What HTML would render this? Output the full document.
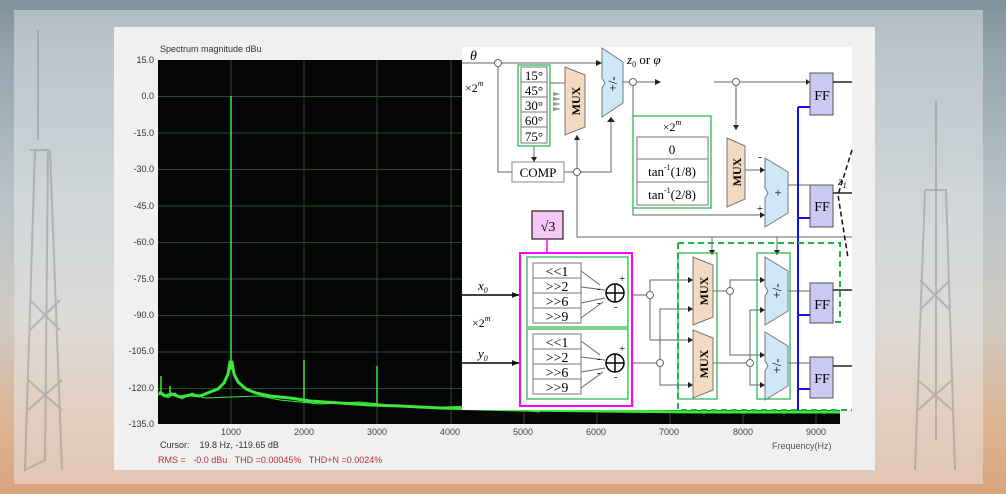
<!DOCTYPE html>
<html><head><meta charset="utf-8"><style>
html,body{margin:0;padding:0}
body{width:1006px;height:494px;overflow:hidden;position:relative;font-family:"Liberation Sans",sans-serif;
background:linear-gradient(180deg,#7f919c 0%,#93a3ad 10%,#b9c3c8 40%,#cfcac2 65%,#dcb595 85%,#d9a47e 100%);}
.ov{position:absolute;left:14px;top:10px;width:969px;height:474px;background:rgba(235,238,240,0.45)}
.panel{position:absolute;left:114px;top:27px;width:761px;height:443px;background:#f0f0f0}
.t{position:absolute;font-size:9px;color:#333;white-space:nowrap}
.y{position:absolute;font-size:9px;color:#333;width:40px;text-align:right;left:114px}
.x{position:absolute;font-size:9px;color:#444;top:427px}
</style></head><body>
<div class="ov"></div>
<svg style="position:absolute;left:0;top:0" width="1006" height="494">
 <g stroke="#8a8f93" stroke-width="2" fill="none" opacity="0.5">
  <path d="M38 30 V140 M30 150 L48 150 L45 460 L25 470 L35 150 M50 150 L62 470 M30 300 L60 330 M60 300 L30 330 M28 380 L62 410 M62 380 L28 410"/>
  <path d="M936 100 V440 M925 190 L946 190 L955 470 M925 190 L915 470 M920 280 L950 310 M950 280 L920 310 M918 380 L952 410 M952 380 L918 410"/>
 </g>
</svg>
<div class="panel"></div>
<div class="t" style="left:160px;top:44px">Spectrum magnitude dBu</div>
<div class="y" style="top:55px">15.0</div>
<div class="y" style="top:91px">0.0</div>
<div class="y" style="top:128px">-15.0</div>
<div class="y" style="top:164px">-30.0</div>
<div class="y" style="top:201px">-45.0</div>
<div class="y" style="top:237px">-60.0</div>
<div class="y" style="top:274px">-75.0</div>
<div class="y" style="top:310px">-90.0</div>
<div class="y" style="top:346px">-105.0</div>
<div class="y" style="top:383px">-120.0</div>
<div class="y" style="top:419px">-135.0</div>
<div class="x" style="left:221px">1000</div>
<div class="x" style="left:294px">2000</div>
<div class="x" style="left:367px">3000</div>
<div class="x" style="left:440px">4000</div>
<div class="x" style="left:513px">5000</div>
<div class="x" style="left:586px">6000</div>
<div class="x" style="left:659px">7000</div>
<div class="x" style="left:733px">8000</div>
<div class="x" style="left:806px">9000</div>
<div class="t" style="left:772px;top:441px;color:#555">Frequency(Hz)</div>
<div class="t" style="left:160px;top:440px">Cursor:&nbsp;&nbsp;&nbsp; 19.8 Hz, -119.65 dB</div>
<div class="t" style="left:158px;top:455px;color:#b0323a">RMS =&nbsp;&nbsp; -0.0 dBu&nbsp;&nbsp; THD =0.00045%&nbsp;&nbsp; THD+N =0.0024%</div>
<svg style="position:absolute;left:0;top:0" width="1006" height="494" font-family="Liberation Serif,serif">
 <rect x="158" y="60" width="682" height="364" fill="#050505"/>
 <g stroke="#2c4a2c" stroke-width="1">
  <path d="M158 96.5H840M158 133H840M158 169.5H840M158 206H840M158 242.5H840M158 279H840M158 315.5H840M158 352H840M158 388.5H840"/>
  <path d="M231 60V424M304 60V424M377 60V424M451 60V424M524 60V424M597 60V424M670 60V424M743 60V424M816 60V424"/>
 </g>
 <g stroke="#3ce83c" fill="none">
  <path stroke-width="3" d="M159 392 L165 396 L172 394 L180 397 L190 395 L200 396 L210 392 L218 389 L224 383 L228 374 L230 362 L232 362 L234 374 L238 382 L246 389 L256 393 L270 396 L290 398 L310 401 L340 403 L370 405 L400 406 L440 408 L480 409 L520 410 L600 411 L700 412 L840 412"/>
  <path stroke-width="1" d="M158 395 L163 393 L168 398 L175 393 L182 399 L192 393 L204 398 L260 396 L280 400 L320 404 L360 402 L420 408 L470 406 L540 412"/>
  <path stroke-width="1.5" d="M231 370 V96 M304 402 V360 M377 406 V366 M161 392 V376 M170 394 V386"/>
 </g>
 <!-- diagram -->
 <rect x="462" y="47" width="390" height="363" fill="#fff"/>
 <g stroke="#666" stroke-width="1" fill="none">
  <path d="M462 63H602 M498 63V172H512 M564 172H577 V135 M577 172H611V117 M577 172V237H852"/>
  <path d="M623 82H660 M714 82H810 M736 82V130 M633 82V215H765 M745 170H765 M788 185H810"/>
  <path d="M534 146V162 M550 83H565"/>
  <path d="M632 295H650 M650 295V280 M650 295V340 M650 280H693 M650 340H693 M632 363H660 M660 363V309H693 M660 363V385H693"/>
  <path d="M713 291H730 M730 291V280H765 M730 291V355H765 M713 363H750 M750 363V310H765 M750 363V385H765"/>
  <path d="M788 291H810 M788 363H810 M712 237V255 M777 237V255"/>
  <path d="M581 271L600 285 M581 287L605 290 M581 303L605 298 M581 318L603 302 M581 341L600 355 M581 357L605 360 M581 372L605 368 M581 388L603 372"/>
 </g>
 <g fill="#222"><path d="M596 60l6 3-6 3z M655 79l6 3-6 3z M806 79l4 3-4 3z M733 125l3 5 3-5z M531 157l3 5 3-5z M607 122l4 -5 4 5z M574 140l3 -5 3 5z M760 167l5 3-5 3z M760 212l5 3-5 3z M512 292l7 3-7 3z M512 360l7 3-7 3z M688 277l5 3-5 3z M688 337l5 3-5 3z M688 306l5 3-5 3z M688 382l5 3-5 3z M760 277l5 3-5 3z M760 352l5 3-5 3z M760 307l5 3-5 3z M760 382l5 3-5 3z M709 250l3 5 3-5z M774 250l3 5 3-5z"/></g>
 <path d="M462 295H520 M462 363H520" stroke="#000" stroke-width="1.5"/>
 <g fill="#fff" stroke="#666"><circle cx="498" cy="63" r="3.5"/><circle cx="633" cy="82" r="3.5"/><circle cx="736" cy="82" r="3.5"/><circle cx="577" cy="172" r="3.5"/><circle cx="650" cy="295" r="3.5"/><circle cx="660" cy="363" r="3.5"/><circle cx="730" cy="291" r="3.5"/><circle cx="750" cy="363" r="3.5"/></g>
 <text x="470" y="60" font-size="14" font-style="italic">θ</text>
 <text x="465" y="92" font-size="12">×2<tspan font-size="8" dy="-6" font-style="italic">m</tspan></text>
 <text x="478" y="290" font-size="13" font-style="italic">x<tspan font-size="8" dy="3">0</tspan></text>
 <text x="472" y="327" font-size="12">×2<tspan font-size="8" dy="-6" font-style="italic">m</tspan></text>
 <text x="478" y="358" font-size="13" font-style="italic">y<tspan font-size="8" dy="3">0</tspan></text>
 <text x="627" y="64" font-size="13"><tspan font-style="italic">z</tspan><tspan font-size="8" dy="3">0</tspan><tspan dy="-3"> or </tspan><tspan font-style="italic">φ</tspan></text>
 <text x="838" y="185" font-size="12" font-style="italic">z<tspan font-size="8" dy="3">1</tspan></text>
 <!-- angle table -->
 <rect x="518" y="65" width="32" height="81" fill="none" stroke="#1db34a" stroke-width="1.2"/>
 <g fill="#fff" stroke="#777"><rect x="521" y="67" width="26" height="15"/><rect x="521" y="82" width="26" height="15"/><rect x="521" y="97" width="26" height="15"/><rect x="521" y="112" width="26" height="15"/><rect x="521" y="127" width="26" height="16"/></g>
 <g font-size="13" text-anchor="middle"><text x="534" y="80">15°</text><text x="534" y="95">45°</text><text x="534" y="110">30°</text><text x="534" y="125">60°</text><text x="534" y="141">75°</text></g>
 <g fill="#999"><path d="M553 92l8 2-8 2z M553 97l8 2-8 2z M553 102l8 2-8 2z M553 107l8 2-8 2z M700 155l8 2-8 2z M700 160l8 2-8 2z M700 165l8 2-8 2z M700 170l8 2-8 2z"/></g>
 <rect x="512" y="162" width="52" height="20" fill="#fff" stroke="#888"/>
 <text x="538" y="177" font-size="13" text-anchor="middle">COMP</text>
 <!-- muxes -->
 <g fill="#f2d9c0" stroke="#777">
  <path d="M565 67L585 75V127L565 135Z"/><path d="M727 138L745 146V199L727 207Z"/>
  <path d="M693 257L713 265V317L693 325Z"/><path d="M693 330L713 338V390L693 398Z"/>
 </g>
 <g font-size="12" font-weight="bold" text-anchor="middle">
  <text transform="translate(580 101) rotate(-90)">MUX</text><text transform="translate(741 172) rotate(-90)">MUX</text>
  <text transform="translate(708 291) rotate(-90)">MUX</text><text transform="translate(708 364) rotate(-90)">MUX</text>
 </g>
 <!-- adders -->
 <g fill="#cfe8f7" stroke="#777">
  <path d="M602 48L623 62V103L602 117V88L605 83L602 78Z"/>
  <path d="M765 158L788 172V213L765 227V198L768 193L765 188Z"/>
  <path d="M765 257L788 271V311L765 325V296L768 291L765 286Z"/>
  <path d="M765 332L788 346V386L765 400V371L768 366L765 361Z"/>
 </g>
 <g font-size="13" text-anchor="middle">
  <text transform="translate(617 84) rotate(-90)">+/-</text><text x="778" y="197">+</text>
  <text transform="translate(781 291) rotate(-90)">+/-</text><text transform="translate(781 366) rotate(-90)">+/-</text>
  <text x="760" y="160" font-size="11">-</text><text x="760" y="212" font-size="11">+</text>
 </g>
 <!-- tan table -->
 <rect x="633" y="116" width="78" height="92" fill="none" stroke="#1db34a" stroke-width="1.2"/>
 <text x="672" y="131" font-size="12" text-anchor="middle">×2<tspan font-size="8" dy="-6" font-style="italic">m</tspan></text>
 <g fill="#fff" stroke="#777"><rect x="637" y="137" width="71" height="22"/><rect x="637" y="159" width="71" height="23"/><rect x="637" y="182" width="71" height="23"/></g>
 <g font-size="13" text-anchor="middle"><text x="672" y="154">0</text><text x="672" y="176">tan<tspan font-size="8" dy="-6">-1</tspan><tspan dy="6">(1/8)</tspan></text><text x="672" y="199">tan<tspan font-size="8" dy="-6">-1</tspan><tspan dy="6">(2/8)</tspan></text></g>
 <!-- FF -->
 <g fill="#c9c9f4" stroke="#555"><rect x="810" y="73" width="23" height="42"/><rect x="810" y="185" width="23" height="42"/><rect x="810" y="283" width="23" height="40"/><rect x="810" y="357" width="23" height="41"/></g>
 <g font-size="14" text-anchor="middle"><text x="822" y="100">FF</text><text x="822" y="211">FF</text><text x="822" y="309">FF</text><text x="822" y="383">FF</text></g>
 <path d="M833 82H852 M833 193H852 M833 290H852 M833 366H852" stroke="#222" stroke-width="1.5"/>
 <path d="M798 107V410 M798 107H810 M798 218H810 M798 315H810 M798 389H810" stroke="#1010f0" stroke-width="2" fill="none"/>
 <path d="M852 150L838 195L848 258" stroke="#111" stroke-dasharray="5 3" fill="none" stroke-width="1.5"/>
 <!-- sqrt3 + magenta -->
 <rect x="532" y="211" width="31" height="28" fill="#f6c6f6" stroke="#222" stroke-width="1.2"/>
 <text x="548" y="231" font-size="14" text-anchor="middle">√3</text>
 <path d="M547 239V253" stroke="#f0f" stroke-width="1.5"/>
 <rect x="520" y="253" width="112" height="153" fill="none" stroke="#f0f" stroke-width="2"/>
 <g fill="none" stroke="#1db34a" stroke-width="1.2"><rect x="527" y="257" width="101" height="70"/><rect x="527" y="329" width="101" height="70"/><rect x="678" y="253" width="39" height="146"/><rect x="757" y="253" width="33" height="146"/></g>
 <path d="M678 243H840V322H832 M678 243V410H852" fill="none" stroke="#1db34a" stroke-width="2" stroke-dasharray="6 4"/>
 <g fill="#fff" stroke="#777"><rect x="533" y="263" width="48" height="15"/><rect x="533" y="278" width="48" height="15"/><rect x="533" y="293" width="48" height="15"/><rect x="533" y="308" width="48" height="15"/><rect x="533" y="334" width="48" height="15"/><rect x="533" y="349" width="48" height="15"/><rect x="533" y="364" width="48" height="15"/><rect x="533" y="379" width="48" height="15"/></g>
 <g font-size="14" text-anchor="middle"><text x="557" y="276">&lt;&lt;1</text><text x="557" y="291">&gt;&gt;2</text><text x="557" y="306">&gt;&gt;6</text><text x="557" y="321">&gt;&gt;9</text><text x="557" y="347">&lt;&lt;1</text><text x="557" y="362">&gt;&gt;2</text><text x="557" y="377">&gt;&gt;6</text><text x="557" y="392">&gt;&gt;9</text></g>
 <g fill="#fff" stroke="#000" stroke-width="1.5"><circle cx="615" cy="293" r="9"/><circle cx="615" cy="363" r="9"/></g>
 <path d="M606 293H624M615 284V302M606 363H624M615 354V372" stroke="#000" stroke-width="1.5"/>
 <g font-size="11"><text x="619" y="282">+</text><text x="597" y="292">-</text><text x="597" y="306">-</text><text x="614" y="310">-</text><text x="619" y="352">+</text><text x="597" y="362">-</text><text x="597" y="376">-</text><text x="614" y="380">-</text></g>
</svg>
</body></html>
